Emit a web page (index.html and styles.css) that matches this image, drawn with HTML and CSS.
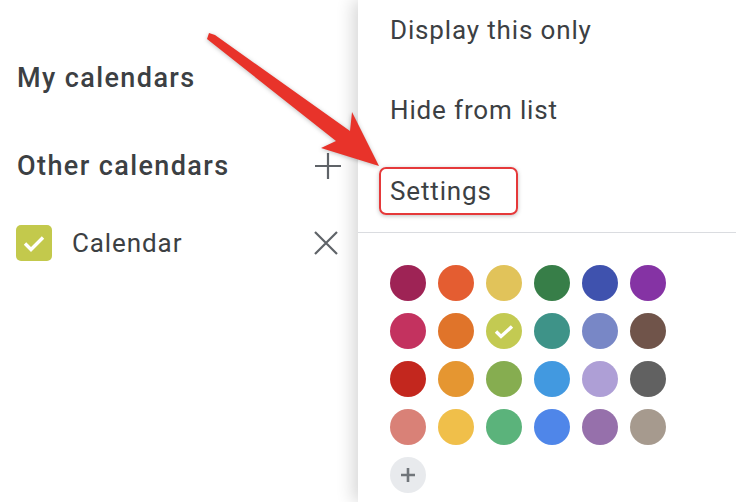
FILE: index.html
```html
<!DOCTYPE html>
<html lang="en">
<head>
    <meta charset="UTF-8">
    <title>Calendar options</title>
    <link rel="stylesheet" href="styles.css">
</head>
<body>
    <div class="page">
        <div class="sidebar">
            <div class="section-title my">My calendars</div>
            <div class="section-title other">
                <span>Other calendars</span>
                <svg class="icon-plus" width="28" height="28" viewBox="0 0 28 28">
                    <path d="M14 1v26M1 14h26" stroke="#5f6368" stroke-width="2.2" fill="none"/>
                </svg>
            </div>
            <div class="cal-row">
                <span class="checkbox">
                    <svg width="36" height="36" viewBox="0 0 36 36">
                        <path d="M9 18.5l6 6 12-12" stroke="#fff" stroke-width="3.4" fill="none"/>
                    </svg>
                </span>
                <span class="cal-name">Calendar</span>
                <svg class="icon-x" width="26" height="26" viewBox="0 0 26 26">
                    <path d="M2 2l22 22M24 2L2 24" stroke="#5f6368" stroke-width="2.2" fill="none"/>
                </svg>
            </div>
            <div class="footer">Terms &ndash; Privacy</div>
        </div>

        <div class="menu">
            <div class="menu-list">
                <div class="menu-item">Display this only</div>
                <div class="menu-item">Hide from list</div>
                <div class="menu-item"><span class="highlight">Settings</span></div>
            </div>
            <div class="divider"></div>
            <div class="swatches">
                <span class="dot" style="background:#9e2355"></span>
                <span class="dot" style="background:#e45d31"></span>
                <span class="dot" style="background:#e1c35a"></span>
                <span class="dot" style="background:#377e48"></span>
                <span class="dot" style="background:#3f52ae"></span>
                <span class="dot" style="background:#8533a4"></span>

                <span class="dot" style="background:#c3325f"></span>
                <span class="dot" style="background:#e0742a"></span>
                <span class="dot selected" style="background:#c3ca52">
                    <svg width="36" height="36" viewBox="0 0 36 36">
                        <path d="M10 18.5l5 5 11-10" stroke="#fff" stroke-width="3.4" fill="none"/>
                    </svg>
                </span>
                <span class="dot" style="background:#3e9388"></span>
                <span class="dot" style="background:#7887c6"></span>
                <span class="dot" style="background:#70544a"></span>

                <span class="dot" style="background:#c3271e"></span>
                <span class="dot" style="background:#e59631"></span>
                <span class="dot" style="background:#86ad50"></span>
                <span class="dot" style="background:#4299e0"></span>
                <span class="dot" style="background:#ae9fd6"></span>
                <span class="dot" style="background:#616161"></span>

                <span class="dot" style="background:#d98177"></span>
                <span class="dot" style="background:#f0bf4a"></span>
                <span class="dot" style="background:#5bb37b"></span>
                <span class="dot" style="background:#4f86e9"></span>
                <span class="dot" style="background:#9670ab"></span>
                <span class="dot" style="background:#a69a8e"></span>

                <span class="dot add">
                    <svg width="36" height="36" viewBox="0 0 36 36">
                        <path d="M18 11v14M11 18h14" stroke="#70757a" stroke-width="2.6" fill="none"/>
                    </svg>
                </span>
            </div>
        </div>

        <!-- annotation arrow drawn over the screenshot -->
        <svg class="arrow" width="736" height="502" viewBox="0 0 736 502">
            <polygon points="209,33 215,35 350,131 352,112 379,166 321,148 336,141 207,39" fill="#e8332a"/>
        </svg>
    </div>
</body>
</html>
```

FILE: styles.css
```css
body {
    margin: 0;
    font-family: Roboto, "Liberation Sans", sans-serif;
    background: #fff;
    overflow: hidden;
}
.page {
    position: relative;
    display: flex;
    width: 736px;
    height: 502px;
    overflow: hidden;
}
.sidebar {
    width: 358px;
    flex-shrink: 0;
    box-sizing: border-box;
    padding: 62px 16px 0 17px;
    color: #3c4043;
}
.section-title {
    font-size: 27px;
    font-weight: 500;
    letter-spacing: 1.4px;
    line-height: 32px;
    height: 32px;
}
.other {
    margin-top: 56px;
    display: flex;
    align-items: center;
    justify-content: space-between;
    padding-right: 1px;
}
.icon-plus {
    margin-right: -1px;
}
.cal-row {
    margin-top: 43px;
    display: flex;
    align-items: center;
    height: 36px;
}
.checkbox {
    width: 36px;
    height: 36px;
    border-radius: 5px;
    background: #c3c94c;
    margin-left: -1px;
}
.checkbox svg {
    display: block;
}
.cal-name {
    margin-left: 20px;
    font-size: 26px;
    letter-spacing: 0.9px;
    line-height: 32px;
    flex: 1;
}
.icon-x {
    margin-right: 3px;
}
.footer {
    margin-top: 236px;
    font-size: 26px;
    letter-spacing: 1px;
    color: #bdc1c6;
    line-height: 32px;
}
.menu {
    flex: 1;
    background: #fff;
    box-shadow: -5px 0 16px rgba(0, 0, 0, 0.16);
    z-index: 1;
}
.menu-list {
    margin-top: -10px;
}
.menu-item {
    height: 80px;
    display: flex;
    align-items: center;
    padding-left: 32px;
    font-size: 26px;
    letter-spacing: 0.85px;
    color: #3c4043;
}
.highlight {
    display: inline-block;
    margin-left: -11px;
    margin-top: 2px;
    padding: 7px 24px 7px 9px;
    border: 2px solid #e5393a;
    border-radius: 7px;
    box-shadow: 0 1px 4px rgba(0, 0, 0, 0.25);
}
.divider {
    margin-top: 2px;
    height: 1px;
    background: #dadce0;
}
.swatches {
    display: grid;
    grid-template-columns: repeat(6, 36px);
    gap: 12px;
    padding: 32px 0 0 390px;
    margin-left: -358px;
}
.dot {
    width: 36px;
    height: 36px;
    border-radius: 50%;
}
.dot svg {
    display: block;
}
.add {
    background: #e8eaed;
}
.arrow {
    position: absolute;
    left: 0;
    top: 0;
    z-index: 2;
    pointer-events: none;
    filter: drop-shadow(0 1px 2px rgba(0, 0, 0, 0.25));
}
```
